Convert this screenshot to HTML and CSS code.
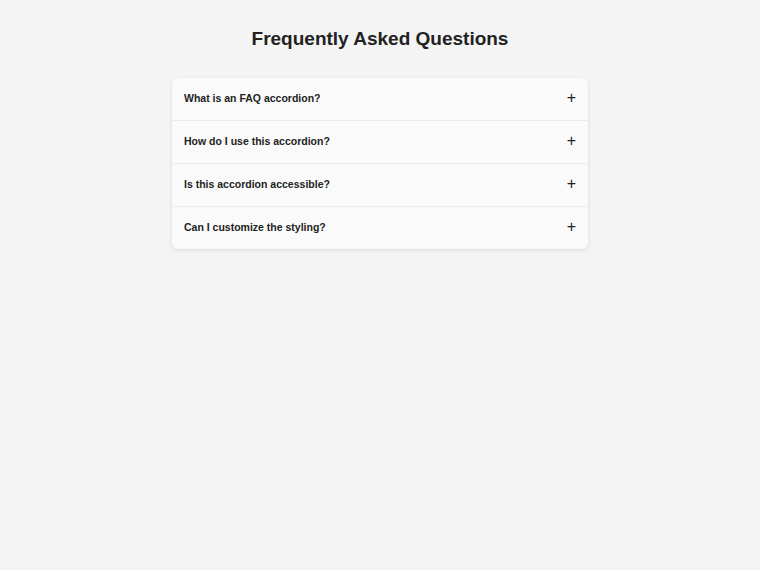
FILE: index.html
```html
<!DOCTYPE html>
<html lang="en">
<head>
  <meta charset="UTF-8" />
  <meta name="viewport" content="width=device-width, initial-scale=1.0"/>
  <title>FAQ Accordion</title>
  <link rel="stylesheet" href="styles.css">
</head>
<body>

  <h1>Frequently Asked Questions</h1>

  <div class="accordion">
    <div class="item">
      <button class="question">What is an FAQ accordion?<span class="icon">+</span></button>
    </div>
    <div class="item">
      <button class="question">How do I use this accordion?<span class="icon">+</span></button>
    </div>
    <div class="item">
      <button class="question">Is this accordion accessible?<span class="icon">+</span></button>
    </div>
    <div class="item">
      <button class="question">Can I customize the styling?<span class="icon">+</span></button>
    </div>
  </div>

</body>
</html>
```

FILE: styles.css
```css
body {
  font-family: "Liberation Sans", Arial, sans-serif;
  margin: 0;
  padding: 26px 20px;
  background: #f4f4f4;
  color: #222;
}
h1 {
  text-align: center;
  font-size: 19px;
  margin: 0 0 26px;
  line-height: 26px;
  color: #222;
}
.accordion {
  width: 416px;
  margin: 0 auto;
  background: #fafafa;
  border-radius: 6px;
  box-shadow: 0 1px 4px rgba(0,0,0,0.1);
  overflow: hidden;
}
.item {
  border-bottom: 1px solid #ebebeb;
}
.item:last-child {
  border-bottom: none;
}
.question {
  display: flex;
  justify-content: space-between;
  align-items: center;
  width: 100%;
  padding: 13px 12px 15px;
  background: none;
  border: none;
  font-family: inherit;
  font-size: 10.5px;
  font-weight: bold;
  line-height: 14px;
  color: #222;
  text-align: left;
  cursor: pointer;
}
.icon {
  font-size: 16px;
  font-weight: normal;
  line-height: 14px;
}
```
